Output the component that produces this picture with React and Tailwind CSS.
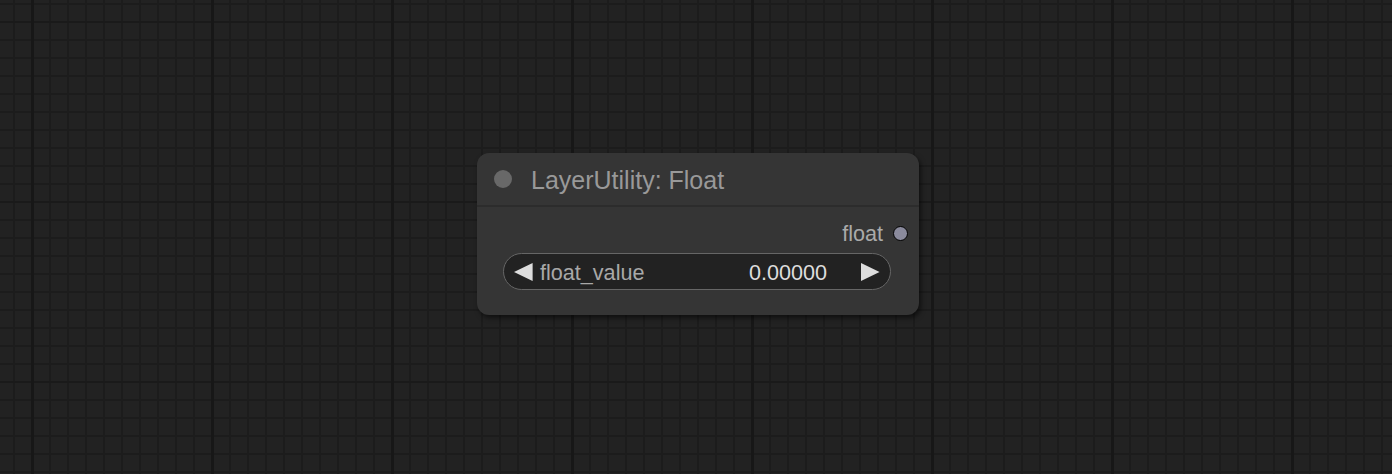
import React from "react";

const GRID =
  "bg-[#222222] " +
  "bg-[image:linear-gradient(to_right,#171717_3px,transparent_3px),linear-gradient(to_bottom,#1a1a1a_2px,transparent_2px),linear-gradient(to_right,#1c1c1c_2px,transparent_2px),linear-gradient(to_bottom,#1c1c1c_2px,transparent_2px)] " +
  "bg-[size:180px_180px,180px_180px,18px_18px,18px_18px] " +
  "bg-[position:31px_0px,0px_21px,13px_0px,0px_3px]";

function Arrow({ dir }) {
  return (
    <svg width="19" height="18" viewBox="0 0 19 18" className="shrink-0">
      {dir === "left" ? (
        <polygon points="0,9 18.6,0 18.6,18" fill="#dddddd" />
      ) : (
        <polygon points="18.6,9 0,0 0,18" fill="#dddddd" />
      )}
    </svg>
  );
}

function FloatNode() {
  return (
    <div className="absolute left-[477px] top-[153px] w-[442px] h-[162px] rounded-[12px] bg-[#353535] shadow-[2px_3px_5px_rgba(0,0,0,0.55)] flex flex-col">
      {/* Title */}
      <div className="h-[54px] shrink-0 flex items-center pl-[17px] gap-[19px] border-b-2 border-[#2c2c2c]">
        <div className="w-[18px] h-[18px] rounded-full bg-[#686868]" />
        <span className="mt-[2px] text-[25px] leading-none text-[#999999]">LayerUtility: Float</span>
      </div>

      {/* Output slot */}
      <div className="mt-[8px] h-[36px] flex items-center justify-end pr-[11px] gap-[10px]">
        <span className="mt-[1px] text-[21.6px] leading-none text-[#aaaaaa]">float</span>
        <div className="w-[15px] h-[15px] rounded-full bg-[#8a8a9c] border-[1.5px] border-black" />
      </div>

      {/* Number widget */}
      <div className="mt-[2px] ml-[26px] w-[388px] h-[37px] rounded-full bg-[#222222] border border-[#666666] flex items-center pl-[10px] pr-[10px]">
        <Arrow dir="left" />
        <span className="ml-[7px] mt-[2px] text-[21.6px] leading-none text-[#a8a8a8]">float_value</span>
        <span className="ml-auto mt-[2px] text-[21.6px] leading-none text-[#dddddd]">0.00000</span>
        <span className="ml-[34px] flex">
          <Arrow dir="right" />
        </span>
      </div>
    </div>
  );
}

export default function App() {
  return (
    <div
      className={`relative w-[1392px] h-[474px] overflow-hidden font-['Liberation_Sans',Arial,sans-serif] ${GRID}`}
    >
      <FloatNode />
    </div>
  );
}
